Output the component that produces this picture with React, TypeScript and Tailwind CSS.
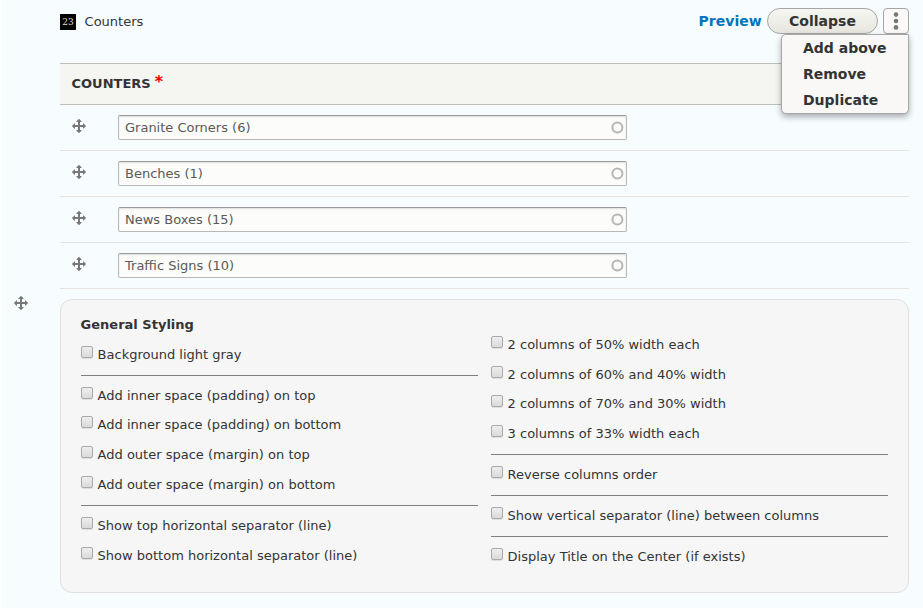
import React from "react";

function Move() {
  return (
    <svg width="16" height="16" viewBox="0 0 16 16" className="block shrink-0" fill="#787878">
      <path d="M14.904 7.753l-2.373-2.372c-.291-.292-.529-.193-.529.22v1.399h-3v-3h1.398c.414 0 .512-.239.221-.53l-2.371-2.372c-.137-.136-.36-.136-.497 0l-2.372 2.372c-.292.292-.193.53.22.53h1.399v3h-3v-1.369c0-.413-.239-.511-.53-.22l-2.372 2.372c-.136.136-.136.359 0 .494l2.372 2.372c.291.292.53.193.53-.221v-1.428h3v3h-1.4c-.413 0-.511.238-.22.529l2.374 2.373c.137.137.36.137.495 0l2.373-2.373c.29-.291.19-.529-.223-.529h-1.399v-3h3v1.4c0 .412.238.511.529.219l2.373-2.371c.137-.137.137-.359 0-.495z" />
    </svg>
  );
}

function Row({ text }: { text: string }) {
  return (
    <div className="flex h-[46px] border-b border-[#e6e4df] pl-[11px]">
      <div className="w-[47px] pt-[13px]"><Move /></div>
      <div className="mt-[10px] flex h-[25px] w-[509px] items-center justify-between rounded-[2px] border border-[#b8b8b8] border-t-[#999] bg-[#fcfcfa] pl-[6px] pr-[2px] text-[#595959] shadow-[inset_0_1px_2px_rgba(0,0,0,0.12)]">
        <span>{text}</span>
        <svg width="13" height="13" viewBox="0 0 13 13" fill="none" stroke="#b5b5b5" strokeWidth="2">
          <circle cx="6.400" cy="6.500" r="5" />
        </svg>
      </div>
    </div>
  );
}

function Check({ text, h = "h-[30px]" }: { text: string; h?: string }) {
  return (
    <label className={`flex ${h} items-start`}>
      <span className="mr-[4.600px] h-3 w-3 shrink-0 rounded-[2px] border border-[#aaa] bg-linear-to-b from-[#eee] to-[#dadada] shadow-[0_1px_1px_rgba(0,0,0,0.1)]" />
      <span className="mt-[1px] leading-[16px] whitespace-nowrap">{text}</span>
    </label>
  );
}

function Line() {
  return <div className="mb-[11px] h-px bg-[#808080]" />;
}

export default function App() {
  return (
    <div className="h-[608px] w-[923px] overflow-hidden bg-white pl-[2px] font-['DejaVu_Sans',sans-serif] text-[13px] leading-[16px] text-[#333]">
      <div className="flex h-full bg-[#f7fcff]">
        <div className="w-[58px] pl-[11px] pt-[295px]"><Move /></div>
        <main className="w-[849px]">
          <header className="flex h-[63px] items-start pt-2">
            <div className="mt-[6px] flex h-4 w-4 items-center justify-center bg-black font-['DejaVu_Serif',serif] text-[9px] leading-none text-[#ddd]">23</div>
            <div className="ml-[8.600px] mt-[6px]">Counters</div>
            <div className="ml-auto flex text-[14px] font-bold">
              <a className="mr-[5.400px] mt-[5px] text-[#0074bd]">Preview</a>
              <button className="h-[26px] w-[111px] rounded-full border border-[#a6a6a6] bg-linear-to-b from-[#f6f6f2] to-[#e6e6de] text-[#333]">Collapse</button>
              <div className="relative ml-[5px] h-[26px] w-[26px]">
                <button className="flex h-full w-full items-center justify-center rounded-[4px] border border-[#a6a6a6] bg-[#faf9f7]">
                  <svg width="6" height="18" viewBox="0 0 6 18" fill="#787878">
                    <circle cx="3" cy="2.600" r="2.300" />
                    <circle cx="3" cy="9" r="2.300" />
                    <circle cx="3" cy="15.400" r="2.300" />
                  </svg>
                </button>
                <div className="absolute right-0 top-[26px] h-[80px] w-[128px] rounded-[5px] rounded-tr-none border border-[#a6a6a6] bg-[#f9f8f6] pl-[21px] leading-[26px] shadow-[0_3px_6px_rgba(0,0,0,0.32)]">
                  <div>Add above</div><div>Remove</div><div>Duplicate</div>
                </div>
              </div>
            </div>
          </header>
          <div className="flex h-[42px] items-center border-y border-[#bfbfba] bg-[#f5f5f2] pl-[11.500px] font-bold">COUNTERS<span className="mb-[4px] ml-[4px] text-[16px] font-bold text-[#e00]">*</span></div>
          <Row text="Granite Corners (6)" />
          <Row text="Benches (1)" />
          <Row text="News Boxes (15)" />
          <Row text="Traffic Signs (10)" />
          <section className="mt-[10px] flex h-[294px] gap-[13px] rounded-[12px] border border-[#e0e0e0] bg-[#f6f6f6] pl-5">
            <div className="w-[397px] pt-[17px]">
              <h3 className="-ml-[0.400px] mb-[13px] font-bold">General Styling</h3>
              <Check text="Background light gray" h="h-[29px]" />
              <Line />
              <Check text="Add inner space (padding) on top" h="h-[29px]" />
              <Check text="Add inner space (padding) on bottom" />
              <Check text="Add outer space (margin) on top" />
              <Check text="Add outer space (margin) on bottom" h="h-[29px]" />
              <Line />
              <Check text="Show top horizontal separator (line)" />
              <Check text="Show bottom horizontal separator (line)" />
            </div>
            <div className="w-[397px] pt-[36px]">
              <Check text="2 columns of 50% width each" />
              <Check text="2 columns of 60% and 40% width" h="h-[29px]" />
              <Check text="2 columns of 70% and 30% width" />
              <Check text="3 columns of 33% width each" h="h-[29px]" />
              <Line />
              <Check text="Reverse columns order" h="h-[29px]" />
              <Line />
              <Check text="Show vertical separator (line) between columns" h="h-[29px]" />
              <Line />
              <Check text="Display Title on the Center (if exists)" />
            </div>
          </section>
        </main>
      </div>
    </div>
  );
}
